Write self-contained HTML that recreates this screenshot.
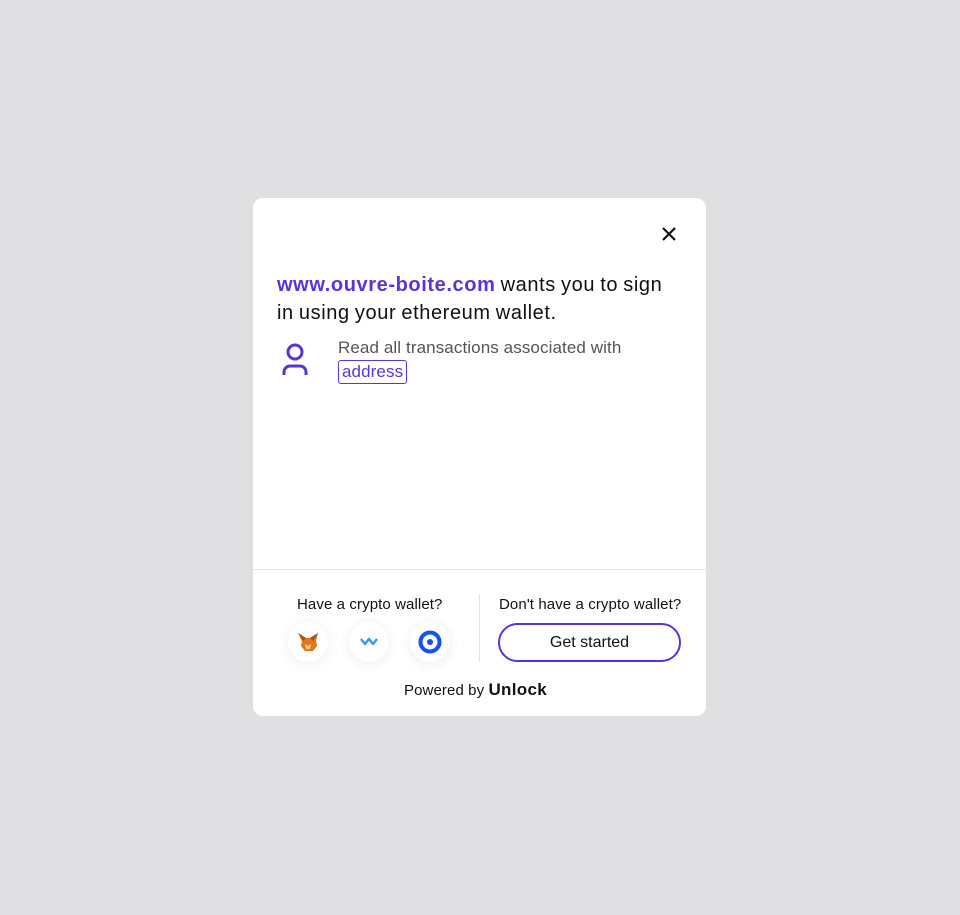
<!DOCTYPE html>
<html><head><style>
*{margin:0;padding:0;box-sizing:border-box}
body{width:960px;height:915px;background:#e0e0e2;font-family:"Liberation Sans",sans-serif;position:relative;overflow:hidden}
.m{position:absolute;left:253px;top:198px;width:453px;height:518px;background:#fff;border-radius:10px}
.x{position:absolute;left:408px;top:28px}
h1{position:absolute;left:24px;top:73px;width:405px;font-size:20px;line-height:28px;font-weight:500;color:#111;letter-spacing:.6px;word-spacing:-1px}
h1 span{color:#5b34d9;font-weight:700}
.u{position:absolute;left:28px;top:145px}
.r{position:absolute;left:85px;top:138px;font-size:17px;color:#555;line-height:24px;letter-spacing:.1px}
.a{display:inline-block;border:1px solid #5b34d9;color:#5b34d9;border-radius:3px;padding:0 3px;line-height:22px}
.hr{position:absolute;left:0;top:371px;width:453px;height:1px;background:#e5e5e5}
.vr{position:absolute;left:226px;top:396px;width:1px;height:68px;background:#e5e5e5}
.t{position:absolute;font-size:15px;color:#111;letter-spacing:.1px}
.c{position:absolute;top:424px;width:40px;height:40px;border-radius:50%;background:#fff;box-shadow:0 2px 12px rgba(0,0,0,.08);display:flex;align-items:center;justify-content:center}
.b{position:absolute;left:245px;top:425px;width:183px;height:39px;border:2px solid #5b34d9;border-radius:20px;text-align:center;line-height:35px;font-size:15px;color:#111}
</style></head><body>
<div class="m">
<svg class="x" width="16" height="16" viewBox="0 0 16 16"><path d="M2 2L14 14M14 2L2 14" stroke="#111" stroke-width="2.2"/></svg>
<h1><span>www.ouvre-boite.com</span> wants you to sign in using your ethereum wallet.</h1>
<svg class="u" width="28" height="34" viewBox="0 0 28 34"><circle cx="14" cy="9" r="7" fill="none" stroke="#5b34d9" stroke-width="3"/><path d="M3 32v-3a6 6 0 0 1 6-6h10a6 6 0 0 1 6 6v3" fill="none" stroke="#5b34d9" stroke-width="3"/></svg>
<div class="r">Read all transactions associated with<br><span class="a">address</span></div>
<div class="hr"></div><div class="vr"></div>
<div class="t" style="left:44px;top:398px">Have a crypto wallet?</div>
<div class="t" style="left:246px;top:398px">Don't have a crypto wallet?</div>
<div class="c" style="left:35px"><svg width="22" height="20" viewBox="0 0 22 20"><path d="M1 1l8 5h4l8-5-2 8 1 5-4 5h-8l-4-5 1-5z" fill="#e2761b"/><path d="M8 12l3 2 3-2-1 5h-4z" fill="#f6c9a0"/><path d="M1 1l8 5-3 3zM21 1l-8 5 3 3z" fill="#a1511c"/></svg></div>
<div class="c" style="left:96px"><svg width="20" height="12" viewBox="0 0 20 12"><path d="M2 3l4 5 4-5 4 5 4-5" fill="none" stroke="#3b99fc" stroke-width="2.5" stroke-linejoin="round"/></svg></div>
<div class="c" style="left:157px"><svg width="24" height="24" viewBox="0 0 24 24"><circle cx="12" cy="12" r="9.5" fill="none" stroke="#1652f0" stroke-width="4"/><circle cx="12" cy="12" r="3" fill="#1652f0"/></svg></div>
<div class="b" style="font-size:16px">Get started</div>
<div class="t" style="left:151px;top:482px">Powered by <b style="font-size:17px;letter-spacing:.3px">Unlock</b></div>
</div>
</body></html>
